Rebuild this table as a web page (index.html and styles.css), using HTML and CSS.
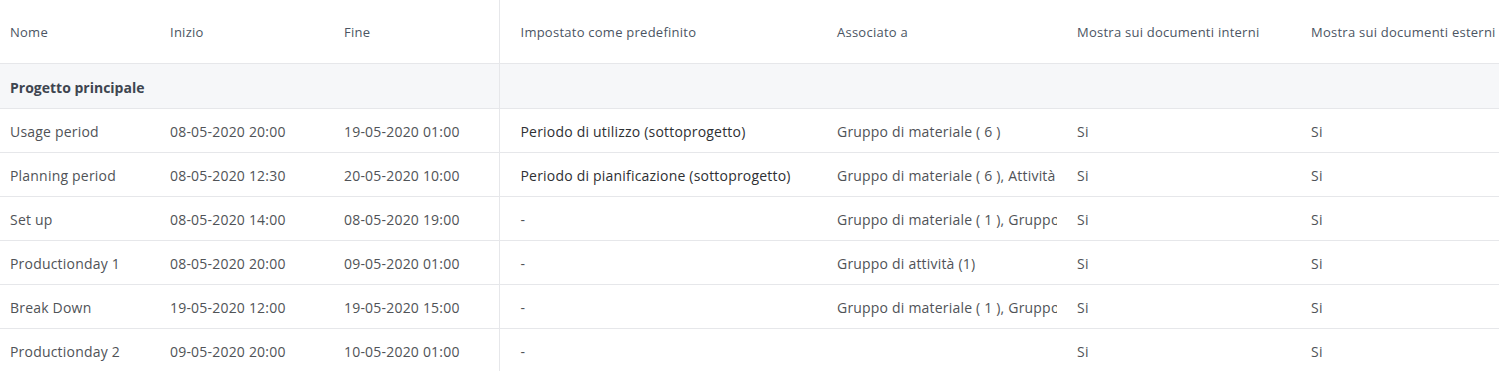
FILE: index.html
```html
<!DOCTYPE html>
<html lang="it">
<head>
<meta charset="utf-8">
<link rel="stylesheet" href="styles.css">
</head>
<body>
<table class="grid">
  <colgroup>
    <col class="c-nome"><col class="c-inizio"><col class="c-fine">
    <col class="c-pred"><col class="c-assoc"><col class="c-int"><col class="c-ext">
  </colgroup>
  <thead>
    <tr>
      <th>Nome</th><th>Inizio</th><th class="split">Fine</th>
      <th class="first-r">Impostato come predefinito</th><th>Associato a</th>
      <th>Mostra sui documenti interni</th><th>Mostra sui documenti esterni</th>
    </tr>
  </thead>
  <tbody>
    <tr class="group">
      <td colspan="3" class="split">Progetto principale</td>
      <td colspan="4"></td>
    </tr>
    <tr>
      <td>Usage period</td><td>08-05-2020 20:00</td><td class="split">19-05-2020 01:00</td>
      <td class="first-r dark">Periodo di utilizzo (sottoprogetto)</td><td><div class="clip">Gruppo di materiale ( 6 )</div></td><td>Si</td><td>Si</td>
    </tr>
    <tr>
      <td>Planning period</td><td>08-05-2020 12:30</td><td class="split">20-05-2020 10:00</td>
      <td class="first-r dark">Periodo di pianificazione (sottoprogetto)</td><td><div class="clip">Gruppo di materiale ( 6 ), Attività</div></td><td>Si</td><td>Si</td>
    </tr>
    <tr>
      <td>Set up</td><td>08-05-2020 14:00</td><td class="split">08-05-2020 19:00</td>
      <td class="first-r">-</td><td><div class="clip">Gruppo di materiale ( 1 ), Gruppo di attività (1)</div></td><td>Si</td><td>Si</td>
    </tr>
    <tr>
      <td>Productionday 1</td><td>08-05-2020 20:00</td><td class="split">09-05-2020 01:00</td>
      <td class="first-r">-</td><td><div class="clip">Gruppo di attività (1)</div></td><td>Si</td><td>Si</td>
    </tr>
    <tr>
      <td>Break Down</td><td>19-05-2020 12:00</td><td class="split">19-05-2020 15:00</td>
      <td class="first-r">-</td><td><div class="clip">Gruppo di materiale ( 1 ), Gruppo di attività (1)</div></td><td>Si</td><td>Si</td>
    </tr>
    <tr>
      <td>Productionday 2</td><td>09-05-2020 20:00</td><td class="split">10-05-2020 01:00</td>
      <td class="first-r">-</td><td></td><td>Si</td><td>Si</td>
    </tr>
  </tbody>
</table>
</body>
</html>
```

FILE: styles.css
```css
html, body {
  margin: 0;
  padding: 0;
  background: #ffffff;
  overflow: hidden;
}
body {
  font-family: "Open Sans", "Liberation Sans", sans-serif;
  color: #4a4d52;
}
.grid {
  border-collapse: collapse;
  table-layout: fixed;
  width: 1560px;
}
.c-nome { width: 160px; }
.c-inizio { width: 174px; }
.c-fine { width: 165px; }
.c-pred { width: 328px; }
.c-assoc { width: 240px; }
.c-int { width: 234px; }
.c-ext { width: 259px; }

.grid th,
.grid td {
  padding: 0 10px;
  text-align: left;
  white-space: nowrap;
  overflow: hidden;
  border-bottom: 1px solid #e6e7ea;
}
.clip {
  overflow: hidden;
  white-space: nowrap;
}
.grid th {
  height: 63px;
  font-size: 13px;
  font-weight: 400;
  color: #4b5563;
  letter-spacing: 0.25px;
}
.grid td {
  height: 41px;
  padding-top: 2px;
  font-size: 14px;
  color: #505357;
  letter-spacing: 0.2px;
}
.grid td.dark {
  color: #2e3033;
}
.grid .split {
  border-right: 1px solid #e6e7ea;
}
.grid .first-r {
  padding-left: 21px;
}
.grid tr.group td {
  height: 42px;
  background: #f6f7f9;
  font-weight: 700;
  color: #3e4550;
  letter-spacing: 0;
}
.grid tr:last-child td {
  border-bottom: none;
}
```
